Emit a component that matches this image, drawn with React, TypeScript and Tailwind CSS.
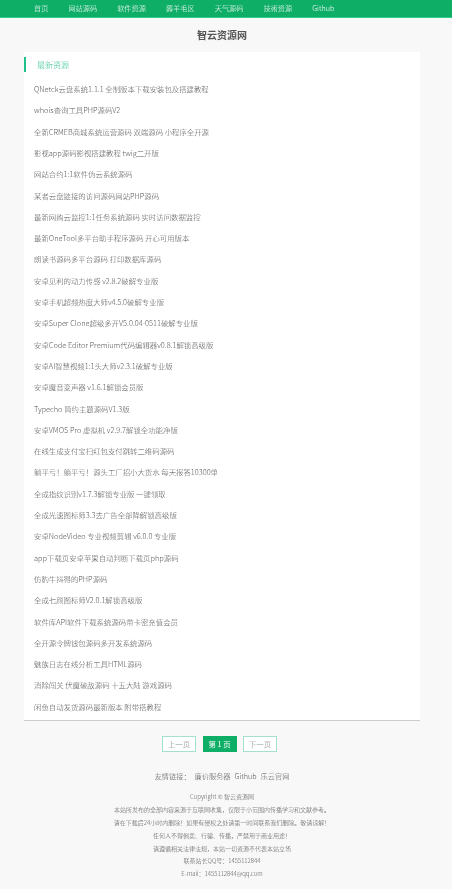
const NAV = ['首页', '网站源码', '软件资源', '薅羊毛区', '天气源码', '技術资源', 'Github']

const POSTS = [
  'QNetck云盘系统1.1.1 全制版本下载安装包及搭建教程',
  'whois查询工具PHP源码V2',
  '全新CRMEB商城系统运营源码 双端源码 小程序全开源',
  '影视app源码影视搭建教程 twig二开版',
  '网站合约1:1软件伪云系统源码',
  '某者云盘链接的访问源码网站PHP源码',
  '最新网购云监控1:1任务系统源码 实时访问数据监控',
  '最新OneTool多平台助手程序源码 开心可用版本',
  '朗读书源码多平台源码 打印数据库源码',
  '安卓见利的动力传感 v2.8.2破解专业版',
  '安卓手机超频热度大师v4.5.0破解专业版',
  '安卓Super Clone超级多开V5.0.04-0511破解专业版',
  '安卓Code Editor Premium代码编辑器v0.8.1解锁高级版',
  '安卓AI智慧视频1:1头大师v2.3.1破解专业版',
  '安卓魔音变声器 v1.6.1解锁会员版',
  'Typecho 简约主题源码V1.3版',
  '安卓VMOS Pro 虚拟机 v2.9.7解锁全功能净版',
  '在线生成支付宝扫红包支付跳转二维码源码',
  '躺平亏！躺平亏！源头工厂招小大货水 每天报答10300单',
  '全成指纹识别v1.7.3解锁专业版 一键领取',
  '全成光速图标师3.3去广告全部降解锁高级版',
  '安卓NodeVideo 专业视频剪辑 v6.0.0 专业版',
  'app下载页安卓苹果自动判断下载页php源码',
  '仿豹牛抖得的PHP源码',
  '全成七颜图标师V2.0.1解锁高级版',
  '软件库API软件下载系统源码带卡密充值会员',
  '全开源令牌钱包源码多开发系统源码',
  '魅族日志在线分析工具HTML源码',
  '消除闯关 伏魔破敌源码 十五大陆 游戏源码',
  '闲鱼自动发货源码最新版本 附带搭教程',
]

const FOOTER = [
  'Copyright © 智云资源网',
  '本站所发布的全部内容来源于互联网收集，仅限于小范围内传播学习和文献参考。',
  '请在下载后24小时内删除！如果有侵权之处请第一时间联系我们删除。敬请谅解！',
  '任何人不得倒卖、行骗、传播，严禁用于商业用途！',
  '请遵循相关法律法规，本站一切资源不代表本站立场',
  '联系站长QQ号：1455112844',
  'E-mail：1455112844@qq.com',
]

export default function App() {
  return (
    <div className="min-h-[889px] bg-[#f8f8f8] font-['Noto_Sans_CJK_SC','Noto_Sans',sans-serif] font-light text-[#555] blur-[0.4px]">
      {/* Nav */}
      <nav className="flex h-[18px] items-center border-b border-[#2fd08c] bg-[#0fae67] px-6">
        {NAV.map((item) => (
          <a key={item} className="px-[10px] text-[7.2px] leading-none text-white">
            {item}
          </a>
        ))}
      </nav>

      <div className="ml-6 mr-8">
        <h1 className="mt-[10px] text-center text-[10px] leading-[14px] font-bold text-[#555]">智云资源网</h1>

        {/* List */}
        <main className="mt-[10px] border-b border-[#ccc] bg-white pt-[5px] pb-[3px]">
          <h2 className="flex h-[15px] items-center border-l-2 border-[#1fc08a] pl-[11px] text-[8px] text-[#2fbf8f]">
            最新资源
          </h2>
          <ul className="mt-[6px]">
            {POSTS.map((post) => (
              <li key={post} className="flex h-[21.31px] items-center pl-[10px] text-[7.4px] text-[#555]">
                {post}
              </li>
            ))}
          </ul>
        </main>

        {/* Pager */}
        <div className="mt-[15px] flex justify-center gap-[6.5px] pr-[5px] text-[7.4px]">
          <a className="flex h-4 w-[34px] items-center justify-center border border-[#a5e0c8] bg-white text-[#777]">上一页</a>
          <a className="flex h-4 w-[34px] items-center justify-center bg-[#0fae67] font-normal text-white">第 1 页</a>
          <a className="flex h-4 w-[34px] items-center justify-center border border-[#a5e0c8] bg-white text-[#777]">下一页</a>
        </div>

        <div className="mt-[18px] flex justify-center gap-[4px] text-[7.2px] leading-[12px] text-[#555]">
          <span>友情链接：</span>
          <a>廉价服务器</a>
          <a>Github</a>
          <a>乐云官网</a>
        </div>

        {/* Footer */}
        <footer className="mt-[9px] text-center text-[6px] leading-[12.9px] text-[#555]">
          {FOOTER.map((line) => (
            <p key={line}>{line}</p>
          ))}
        </footer>
      </div>
    </div>
  )
}
